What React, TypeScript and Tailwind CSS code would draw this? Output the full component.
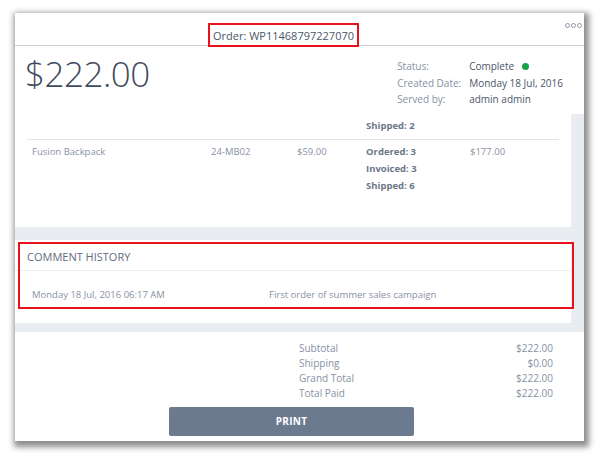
export default function App() {
  const font = { fontFamily: '"Open Sans", "Noto Sans", sans-serif' };

  return (
    <div className="w-[600px] h-[455px] bg-white pl-[15px] pt-[13px]" style={font}>
      <div className="relative w-[569px] h-[428px] bg-white flex flex-col shadow-[2px_3px_6px_3px_rgba(0,0,0,0.45)]">
        {/* Header */}
        <div className="relative h-[33px] shrink-0 border-b border-[#c9d0d9]">
          <div className="absolute left-[193px] top-[10px] w-[151px] h-[24px] border-2 border-[#e8131a] flex items-center justify-center">
            <span className="text-[11px] text-[#4b5668] leading-none whitespace-nowrap pt-[1px]">Order: WP11468797227070</span>
          </div>
          <div className="absolute right-[2px] top-[10px] flex gap-[1px]">
            <span className="w-[5px] h-[5px] rounded-full border border-[#8c97a8]" />
            <span className="w-[5px] h-[5px] rounded-full border border-[#8c97a8]" />
            <span className="w-[5px] h-[5px] rounded-full border border-[#8c97a8]" />
          </div>
        </div>

        {/* Summary */}
        <div className="h-[68px] shrink-0 flex justify-between pl-[10px] pr-[21px]">
          <div className="text-[35px] font-light text-[#3f4b5d] leading-none pt-[10px] tracking-[-0.5px]">$222.00</div>
          <div className="pt-[12px] text-[10px] leading-[16.5px] whitespace-nowrap">
            <div className="flex">
              <span className="w-[72px] text-[#8691a3]">Status:</span>
              <span className="text-[#4b5668] flex items-center gap-[8px]">
                Complete
                <span className="w-[7px] h-[7px] rounded-full bg-[#17a24a]" />
              </span>
            </div>
            <div className="flex">
              <span className="w-[72px] text-[#8691a3]">Created Date:</span>
              <span className="text-[#4b5668]">Monday 18 Jul, 2016</span>
            </div>
            <div className="flex">
              <span className="w-[72px] text-[#8691a3]">Served by:</span>
              <span className="text-[#4b5668]">admin admin</span>
            </div>
          </div>
        </div>

        {/* Scroll area */}
        <div className="h-[218px] shrink-0 bg-[#e9ecf1] pr-[13px] flex flex-col">
          <div className="h-[113px] bg-white text-[9.5px] leading-[17px] text-[#8892a4]">
            <div className="pt-[3px] pl-[351px] font-bold text-[#6c7688]">Shipped: 2</div>
            <div className="mx-[12px] mt-[5px] border-t border-[#e3e7ec]" />
            <div className="flex pt-[3px]">
              <div className="w-[196px] pl-[17px]">Fusion Backpack</div>
              <div className="w-[86px]">24-MB02</div>
              <div className="w-[69px]">$59.00</div>
              <div className="w-[104px] font-bold text-[#6c7688]">
                <div>Ordered: 3</div>
                <div>Invoiced: 3</div>
                <div>Shipped: 6</div>
              </div>
              <div>$177.00</div>
            </div>
          </div>

          <div className="relative mt-[13px] h-[83px] bg-white">
            <div className="h-[31px] border-b border-[#eceff3] pl-[12px] pt-[8px] text-[11px] text-[#5f6b7c] leading-[17px]">
              COMMENT HISTORY
            </div>
            <div className="flex pt-[15px] text-[9.5px] text-[#8892a4] leading-[17px]">
              <div className="w-[254px] pl-[17px]">Monday 18 Jul, 2016 06:17 AM</div>
              <div>First order of summer sales campaign</div>
            </div>
            <div className="absolute left-[3px] top-[2px] w-[556px] h-[67px] border-2 border-[#e8131a]" />
          </div>
        </div>

        {/* Totals */}
        <div className="flex-1 pt-[9px] text-[10px] leading-[15px] text-[#8691a3]">
          <div className="flex flex-col pl-[284px] pr-[31px]">
            <div className="flex justify-between"><span>Subtotal</span><span>$222.00</span></div>
            <div className="flex justify-between"><span>Shipping</span><span>$0.00</span></div>
            <div className="flex justify-between"><span>Grand Total</span><span>$222.00</span></div>
            <div className="flex justify-between"><span>Total Paid</span><span>$222.00</span></div>
          </div>
          <div className="pl-[154px] pt-[6px]">
            <button className="w-[245px] h-[29px] rounded-[2px] bg-[#6c7a8f] text-white text-[10px] font-bold tracking-[0.3px]">
              PRINT
            </button>
          </div>
        </div>
      </div>
    </div>
  );
}
